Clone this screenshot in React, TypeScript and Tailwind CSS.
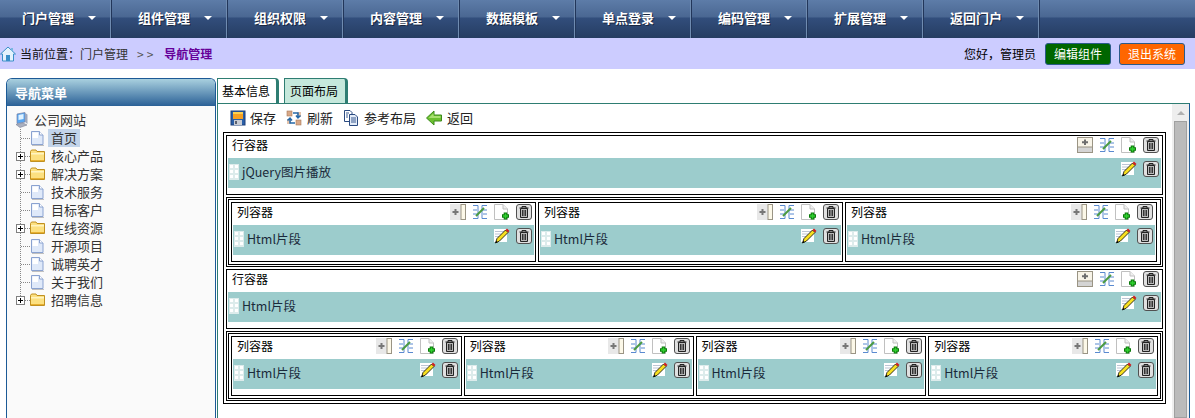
import React from 'react';

const FONT = '"Noto Sans CJK SC", "Liberation Sans", sans-serif';

const HomeIcon = () => (
  <svg width="16" height="16" viewBox="0 0 16 16" className="shrink-0">
    <path d="M8 1 L15.5 8 L13.5 8 L13.5 15 L2.5 15 L2.5 8 L0.5 8 Z" fill="#e4f2fc" stroke="#3a8fc8" strokeWidth="1" />
    <rect x="6" y="9" width="4" height="6" fill="#3a8fc8" />
    <path d="M11 2 h2 v3 h-2 z" fill="#7ab8e0" />
  </svg>
);

const SaveIcon = () => (
  <svg width="16" height="16" viewBox="0 0 16 16" className="-mr-px shrink-0">
    <rect x="1" y="1" width="14" height="14" fill="#2a5fa8" stroke="#1c3f78" />
    <rect x="3" y="2" width="10" height="7" fill="#f8a020" />
    <rect x="3" y="2" width="10" height="2" fill="#fcd050" />
    <rect x="4" y="10" width="8" height="5" fill="#c8ccd4" />
    <rect x="5" y="11" width="2" height="3" fill="#5a6070" />
  </svg>
);

const RefreshIcon = () => (
  <svg width="16" height="16" viewBox="0 0 16 16" className="shrink-0">
    <rect x="1" y="1" width="5" height="5" fill="#d8a888" stroke="#a87858" strokeWidth="0.6" />
    <rect x="10" y="10" width="5" height="5" fill="#d8a888" stroke="#a87858" strokeWidth="0.6" />
    <rect x="1" y="9" width="4" height="5" fill="#e4c4ac" />
    <rect x="11" y="2" width="4" height="5" fill="#e4c4ac" />
    <path d="M7 3 H12 V7 M10 5.5 L12 8 L14.5 5.5" fill="none" stroke="#2468a8" strokeWidth="1.5" />
    <path d="M9 13 H4 V9 M1.5 10.5 L4 8 L6 10.5" fill="none" stroke="#2468a8" strokeWidth="1.5" />
  </svg>
);

const CopyIcon = () => (
  <svg width="16" height="16" viewBox="0 0 16 16" className="shrink-0">
    <path d="M1.5 0.5 H7 L9 2.5 V11.5 H1.5 Z" fill="#fff" stroke="#2a4a80" />
    <path d="M6.5 4.5 H12 L14.5 7 V15.5 H6.5 Z" fill="#e4ecf8" stroke="#2a4a80" />
    <path d="M8 8 H13 M8 10 H13 M8 12 H13 M3 3 H6 M3 5 H5 M3 7 H5" stroke="#3a5a90" strokeWidth="1" />
  </svg>
);

const BackIcon = () => (
  <svg width="16" height="16" viewBox="0 0 16 16" className="shrink-0">
    <path d="M0.5 8 L8 1 V5 H15.5 V11 H8 V15 Z" fill="#6cc030" stroke="#3c8a1c" />
    <path d="M2.5 8 L7.5 3.5 V6 H14.5 V8 Z" fill="#a8e070" />
  </svg>
);

const PageIcon = () => (
  <svg width="13" height="16" viewBox="0 0 13 16" className="shrink-0">
    <path d="M0.5 1.5 H8.5 L12 5 V14.5 H0.5 Z" fill="#dfe9f9" stroke="#8aa2d0" />
    <path d="M1.5 2.5 H7 V8 H1.5 Z" fill="#fff" />
    <path d="M8.5 1.5 V5 H12" fill="#fff" stroke="#8aa2d0" />
    <path d="M1 15.5 H13" stroke="#c0c0c0" />
  </svg>
);

const FolderIcon = () => (
  <svg width="15" height="14" viewBox="0 0 15 14" className="shrink-0">
    <path d="M0.5 2.5 L1.5 1 H6 L7 2.5 H14.5 V12.5 H0.5 Z" fill="#fce080" stroke="#c09020" />
    <path d="M1 4 H14 V5.5 H1 Z" fill="#fff4c0" />
    <path d="M1 11 H14 V12 H1 Z" fill="#e8b030" />
  </svg>
);

const ComputerIcon = () => (
  <svg width="13" height="16" viewBox="0 0 13 16" className="shrink-0">
    <path d="M2 2 L10 0.5 V10 L2 11.5 Z" fill="#58a8f4" stroke="#7880a0" strokeWidth="0.7" />
    <path d="M3.5 3 L8.5 2 V7 L3.5 8 Z" fill="#e0f2ff" />
    <path d="M10 1 L12.5 2.5 V12 L10 10 Z" fill="#a0a8bc" />
    <path d="M1 12.5 L8 11 L12 13 L5 15.5 Z" fill="#aab0c0" stroke="#7a8094" strokeWidth="0.6" />
  </svg>
);

// connector drawn beside each tree node: dotted lines and the optional +
const Connector = ({ expandable, last }: { expandable: boolean; last: boolean }) => (
  <svg width="30" height="18" viewBox="0 0 30 18" className="shrink-0">
    <path d={last ? 'M13.5 0 V9' : 'M13.5 0 V18'} stroke="#888" strokeDasharray="1 1" />
    <path d="M14 9.5 H24" stroke="#888" strokeDasharray="1 1" />
    {expandable && (
      <g>
        <rect x="9.5" y="5.5" width="8" height="8" fill="#fff" stroke="#808080" />
        <path d="M11 9.5 H16 M13.5 7 V12" stroke="#000" />
      </g>
    )}
  </svg>
);

const AddRowIcon = () => (
  <svg width="16" height="16" viewBox="0 0 16 16" className="shrink-0">
    <rect x="0.5" y="0.5" width="15" height="15" fill="#f8f4e8" stroke="#9a9484" />
    <rect x="1" y="10" width="14" height="5" fill="#d4d4d4" />
    <path d="M0.5 10 H15.5" stroke="#9a9484" />
    <path d="M8 2.5 V8 M5 5.2 H11" stroke="#6e6e6e" strokeWidth="2" />
  </svg>
);

const AddColIcon = () => (
  <svg width="16" height="16" viewBox="0 0 16 16" className="shrink-0">
    <rect x="0" y="0" width="11" height="16" fill="#e8e8e8" />
    <rect x="11" y="0.5" width="4.5" height="15" fill="#fcf8e8" stroke="#9a9484" />
    <path d="M5.5 5 V11 M2.5 8 H8.5" stroke="#777" strokeWidth="2" />
  </svg>
);

const MergeIcon = () => (
  <svg width="16" height="16" viewBox="0 0 16 16" className="shrink-0">
    <path d="M1 1.5 H6 V14.5 H1 M1 6 H5 M1 10 H5" fill="none" stroke="#5a8ad0" />
    <path d="M15 1.5 H10 V14.5 H15 M15 6 H11 M15 10 H11" fill="none" stroke="#5a8ad0" />
    <path d="M4 12 L12 4" stroke="#4a9a40" strokeWidth="2" />
  </svg>
);

const NewPageIcon = () => (
  <svg width="16" height="16" viewBox="0 0 16 16" className="shrink-0">
    <path d="M0.5 0.5 H9 L13.5 5 V15.5 H0.5 Z" fill="#fff" stroke="#c0c0c0" />
    <path d="M9 0.5 V5 H13.5" fill="#f0f0f0" stroke="#c0c0c0" />
    <path d="M11.5 8.5 V15.5 M8 12 H15" stroke="#0a7a0a" strokeWidth="3.6" />
    <path d="M11.5 9.5 V14.5 M9 12 H14" stroke="#30d030" strokeWidth="1.6" />
  </svg>
);

const TrashIcon = () => (
  <svg width="16" height="16" viewBox="0 0 16 16" className="shrink-0">
    <rect x="0.5" y="0.5" width="15" height="15" rx="2.5" fill="#e0e0e0" stroke="#505050" />
    <path d="M3.5 4 H12.5 M6 4 V2.5 H10 V4" fill="none" stroke="#222" />
    <path d="M4.5 4.5 H11.5 V13.5 H4.5 Z" fill="#b8b8b8" stroke="#222" />
    <path d="M6.5 6 V12 M8 6 V12 M9.5 6 V12" stroke="#333" />
  </svg>
);

const PencilIcon = () => (
  <svg width="16" height="16" viewBox="0 0 16 16" className="shrink-0">
    <rect x="0" y="1" width="13" height="13" fill="#fff" />
    <path d="M1.5 3.5 H10 M1.5 6 H7 M1.5 8.5 H5" stroke="#7a8aa8" strokeDasharray="1 1" />
    <path d="M1.5 15 L3 10.5 L11.5 2 L14 4.5 L5.5 13 Z" fill="#f8e020" stroke="#000" strokeWidth="0.8" />
    <path d="M11.5 2 L13 0.5 L15.5 3 L14 4.5 Z" fill="#d02020" />
    <path d="M1.5 15 L2.2 12.8 L3.8 14.3 Z" fill="#000" />
  </svg>
);

const Grip = () => (
  <svg width="10" height="16" viewBox="0 0 10 16" className="shrink-0">
    <rect width="10" height="16" fill="#dcebeb" />
    <path d="M1 1 H4 V4 H1 Z M6 1 H9 V4 H6 Z M1 6 H4 V9 H1 Z M6 6 H9 V9 H6 Z M1 11 H4 V14 H1 Z M6 11 H9 V14 H6 Z" fill="#ffffff" />
  </svg>
);

const Caret = () => (
  <svg width="8" height="4" viewBox="0 0 8 4" className="shrink-0">
    <path d="M0 0 H8 L4 4 Z" fill="#fff" />
  </svg>
);

const navItems = ['门户管理', '组件管理', '组织权限', '内容管理', '数据模板', '单点登录', '编码管理', '扩展管理', '返回门户'];

const treeItems = [
  { label: '首页', folder: false },
  { label: '核心产品', folder: true },
  { label: '解决方案', folder: true },
  { label: '技术服务', folder: false },
  { label: '目标客户', folder: false },
  { label: '在线资源', folder: true },
  { label: '开源项目', folder: false },
  { label: '诚聘英才', folder: false },
  { label: '关于我们', folder: false },
  { label: '招聘信息', folder: true },
];

const ToolButton = ({ icon, label }: { icon: React.ReactNode; label: string }) => (
  <div className="flex items-center gap-[5px] text-[13px] text-[#222]">
    {icon}
    <span>{label}</span>
  </div>
);

const Widget = ({ title, grid, name }: { title: string; grid: React.ReactNode; name: string }) => (
  <div className="flex h-[60px] min-w-0 flex-col border border-black bg-white px-px">
    <div className="flex h-[22px] shrink-0 items-center justify-between pr-[2px] pb-[4px] pl-[4px] text-[12px] leading-none text-black">
      <span>{title}</span>
      <div className="flex items-center gap-[6px]">
        {grid}
        <MergeIcon />
        <NewPageIcon />
        <TrashIcon />
      </div>
    </div>
    <div className="flex h-[30px] shrink-0 items-center justify-between bg-[#9ccccc] pr-[2px] pl-px">
      <div className="flex items-center gap-[3px] pb-[2px] text-[12.5px] text-[#1a2a3a]">
        <Grip />
        <span>{name}</span>
      </div>
      <div className="mb-[8px] flex items-center gap-[6px]">
        <PencilIcon />
        <TrashIcon />
      </div>
    </div>
  </div>
);

const ColumnsRow = ({ columns }: { columns: { width: string }[] }) => (
  <div className="border border-black p-px">
    <div className="flex gap-[2px] border border-black p-[2px]">
      {columns.map((c, i) => (
        <div key={i} className={c.width}>
          <Widget title="列容器" name="Html片段" grid={<AddColIcon />} />
        </div>
      ))}
    </div>
  </div>
);

export default function App() {
  return (
    <div className="flex h-[418px] w-[1195px] flex-col overflow-hidden bg-white" style={{ fontFamily: FONT }}>
      {/* top menu */}
      <div className="flex h-[38px] shrink-0 bg-[linear-gradient(#5d7ca8_0%,#4a6792_45%,#324e7c_47%,#263d62_100%)]">
        <div className="-ml-1 flex">
          {navItems.map((item) => (
            <div
              key={item}
              className="flex w-[116px] items-center justify-between border-r border-r-[#22365a] pr-[15px] pb-[3px] pl-[26px] shadow-[inset_-1px_0_0_#6f8bb0]"
            >
              <span className="text-[13px] leading-none font-bold text-white [text-shadow:1px_1px_0_#1a2740]">{item}</span>
              <Caret />
            </div>
          ))}
        </div>
      </div>

      {/* breadcrumb */}
      <div className="flex h-[31px] shrink-0 items-center justify-between bg-[#ccccff] pr-[10px] text-[12px]">
        <div className="flex items-center">
          <HomeIcon />
          <span className="ml-[4px] text-[#111]">当前位置：</span>
          <span className="text-[#333]">门户管理</span>
          <span className="mr-[8px] ml-[9px] tracking-[3px] text-[#555]">&gt;&gt;</span>
          <span className="font-bold text-[#660099]">导航管理</span>
        </div>
        <div className="flex items-center">
          <span className="mr-[9px] text-black">您好，管理员</span>
          <button className="mr-[8px] h-[22px] w-[66px] rounded-[3px] border border-[#2a5a8a] bg-[#006600] text-white">编辑组件</button>
          <button className="h-[22px] w-[66px] rounded-[3px] border border-[#2a5a8a] bg-[#ff6600] text-white">退出系统</button>
        </div>
      </div>

      <div className="flex min-h-0 flex-1 gap-px pt-[9px] pl-[6px]">
        {/* left tree */}
        <div className="flex w-[210px] shrink-0 flex-col rounded-t-[6px] border border-b-0 border-[#1c5a96] bg-[#fafafa]">
          <div className="flex h-[27px] shrink-0 items-center rounded-t-[5px] bg-[linear-gradient(#a9d0df,#2a6096)] pt-px pl-[8px] text-[13px] font-bold text-white">
            导航菜单
          </div>
          <div className="flex flex-col pt-[5px] text-[13px] text-[#333]">
            <div className="flex h-[18px] items-center pl-[8px]">
              <ComputerIcon />
              <span className="ml-[6px]">公司网站</span>
            </div>
            {treeItems.map((t, i) => (
              <div key={t.label} className="flex h-[18px] items-center">
                <Connector expandable={t.folder} last={i === treeItems.length - 1} />
                <span className="-ml-[7px] flex w-[15px] justify-center">{t.folder ? <FolderIcon /> : <PageIcon />}</span>
                <span className={`ml-[3px] px-[3px] leading-[18px] ${i === 0 ? 'bg-[#c2d4ea]' : ''}`}>{t.label}</span>
              </div>
            ))}
          </div>
        </div>

        {/* right content */}
        <div className="flex w-[973px] shrink-0 flex-col">
          <div className="flex h-[25px] shrink-0 gap-[5px] text-[12px] text-black">
            <div className="flex w-[62px] items-center justify-center rounded-tr-[4px] border-t border-r-[3px] border-l border-[#2e7d72] bg-white pr-[2px]">基本信息</div>
            <div className="flex w-[64px] items-center justify-center rounded-tr-[4px] border-t border-r-[3px] border-l border-[#2e7d72] bg-[#c5e8dc] pr-[2px]">页面布局</div>
          </div>
          <div className="flex min-h-0 flex-1 border-t border-r border-l border-t-[#2e7d72] border-r-[#1c5a96] border-l-[#2e7d72]">
            <div className="min-w-0 flex-1 pl-[5px]">
              <div className="flex h-[28px] items-center gap-[10px] pl-[7px]">
                <ToolButton icon={<SaveIcon />} label="保存" />
                <ToolButton icon={<RefreshIcon />} label="刷新" />
                <ToolButton icon={<CopyIcon />} label="参考布局" />
                <ToolButton icon={<BackIcon />} label="返回" />
              </div>
              <div className="flex w-[943px] flex-col gap-[2px] border border-black p-[2px]">
                <Widget title="行容器" name="jQuery图片播放" grid={<AddRowIcon />} />
                <ColumnsRow columns={[{ width: 'w-[305px]' }, { width: 'w-[305px]' }, { width: 'w-[312px]' }]} />
                <Widget title="行容器" name="Html片段" grid={<AddRowIcon />} />
                <ColumnsRow columns={[{ width: 'w-[231px]' }, { width: 'w-[230px]' }, { width: 'w-[231px]' }, { width: 'w-[230px]' }]} />
              </div>
            </div>
            {/* scrollbar */}
            <div className="flex w-[17px] shrink-0 flex-col items-center bg-[#eeeeee]">
              <div className="flex h-[17px] items-center justify-center">
                <svg width="8" height="4" viewBox="0 0 8 4">
                  <path d="M4 0 L8 4 H0 Z" fill="#b0b0b0" />
                </svg>
              </div>
              <div className="w-[13px] flex-1 border border-[#a0a0a0] bg-[#bbbbbb]" />
            </div>
          </div>
        </div>
      </div>
    </div>
  );
}
